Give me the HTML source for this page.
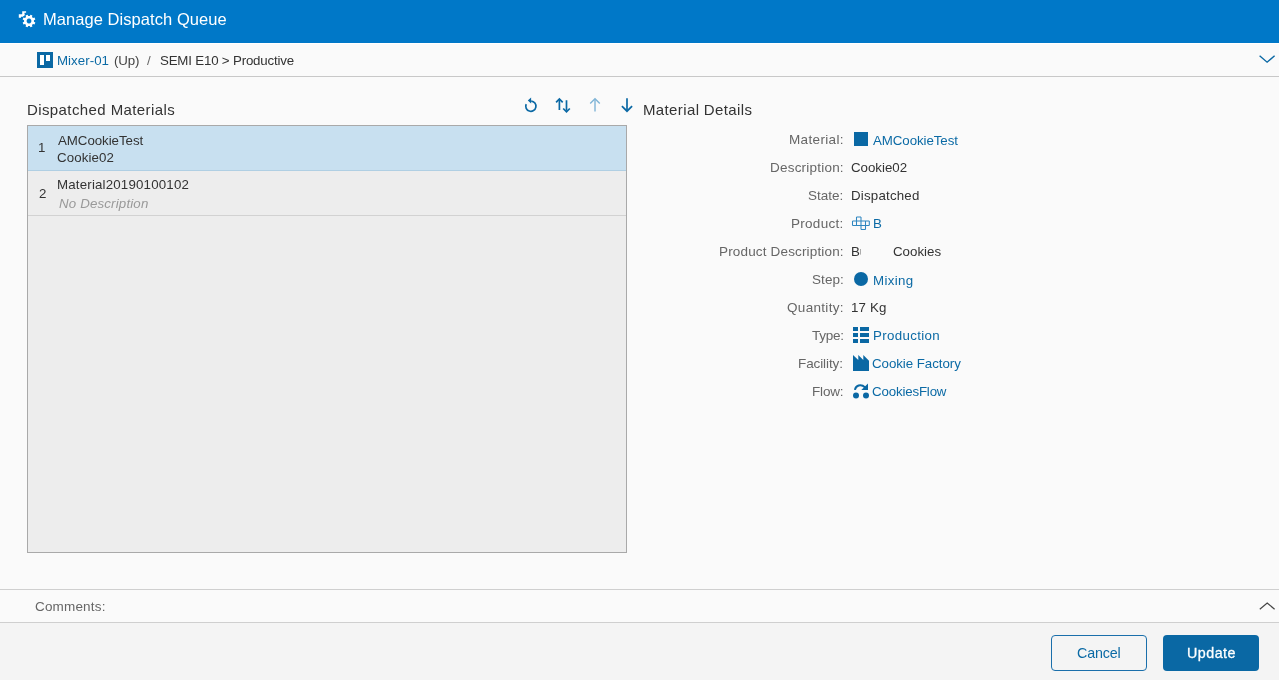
<!DOCTYPE html>
<html><head><meta charset="utf-8">
<style>
*{box-sizing:border-box;margin:0;padding:0}
html,body{width:1279px;height:680px;overflow:hidden;background:#fafafa;font-family:"Liberation Sans",sans-serif;color:#333}
.abs{position:absolute}
.tx{position:absolute;white-space:nowrap;line-height:16px;will-change:transform}
#hdr{position:absolute;left:0;top:0;width:1279px;height:43px;background:#0078c8}
#crumb{position:absolute;left:0;top:43px;width:1279px;height:34px;background:#fafafa;border-top:1px solid #fff;border-bottom:1px solid #c8c8c8}
#list{position:absolute;left:27px;top:125px;width:600px;height:428px;border:1px solid #a9a9a9;background:#ededed}
.row{position:absolute;left:0;width:598px;height:45px;border-bottom:1px solid #d2d2d2}
#cbar{position:absolute;left:0;top:589px;width:1279px;height:34px;border-top:1px solid #cfcfcf;border-bottom:1px solid #cfcfcf;background:#fafafa}
#foot{position:absolute;left:0;top:623px;width:1279px;height:57px;background:#f4f4f4}
.btn{position:absolute;top:635px;height:36px;border-radius:4px}
#bcancel{left:1051px;width:96px;border:1px solid #1a6fab;background:transparent}
#bupdate{left:1163px;width:96px;background:#0a68a4}
</style></head>
<body>
<div id="hdr">
  <svg class="abs" style="left:0;top:0" width="43" height="43" viewBox="0 0 43 43">
    <defs><mask id="gm"><rect width="43" height="43" fill="#fff"/><circle cx="29" cy="21" r="7.2" fill="#000"/></mask></defs>
    <path mask="url(#gm)" fill="#fff" d="M22.2 11.2H26.1V12.7H24.5V14.2H24.8V16.2H23.2V16.8H21V17.8H18.8V14.2H22.2Z"/>
    <path fill="#fff" fill-rule="evenodd" d="M33.94 21.76 L35.33 22.48 L34.52 24.43 L33.03 23.96 L31.96 25.03 L32.43 26.52 L30.48 27.33 L29.76 25.94 L28.24 25.94 L27.52 27.33 L25.57 26.52 L26.04 25.03 L24.97 23.96 L23.48 24.43 L22.67 22.48 L24.06 21.76 L24.06 20.24 L22.67 19.52 L23.48 17.57 L24.97 18.04 L26.04 16.97 L25.57 15.48 L27.52 14.67 L28.24 16.06 L29.76 16.06 L30.48 14.67 L32.43 15.48 L31.96 16.97 L33.03 18.04 L34.52 17.57 L35.33 19.52 L33.94 20.24Z M29 18.6a2.4 2.4 0 1 0 0.001 0Z"/>
  </svg>
</div>
<div id="crumb">
  <svg class="abs" style="left:37px;top:8px" width="16" height="16" viewBox="0 0 16 16">
    <rect width="16" height="16" fill="#0a68a4"/>
    <rect x="3" y="3" width="4" height="10" fill="#fff"/>
    <rect x="9" y="3" width="4" height="6" fill="#fff"/>
  </svg>
  <svg class="abs" style="left:1255px;top:8px" width="24" height="16" viewBox="1255 51 24 16"><path d="M1259.6 54.8l7.5 6.4 7.5-6.4" fill="none" stroke="#0a68a4" stroke-width="1.4"/></svg>
</div>

<!-- toolbar -->
<svg class="abs" style="left:520px;top:94px" width="120" height="22" viewBox="520 94 120 22">
  <g fill="none" stroke="#0a68a4" stroke-width="1.7">
    <path d="M531.2 101.1 A5.1 5.1 0 1 1 526.2 104.1"/>
    <path d="M559.4 100v10M566.5 100.2v10.5"/>
    <path d="M627 98.2v12.5"/>
    <path d="M621.9 106.1l5.1 5.1 5.1-5.1"/>
    <path d="M556.1 102.4l3.3-3.4 3.3 3.4"/>
    <path d="M563.2 108.5l3.3 3.4 3.3-3.4"/>
  </g>
  <path d="M527.8 100.6l3.3-3v6z" fill="#0a68a4"/>
  <g fill="none" stroke="#7fb4d6" stroke-width="1.4">
    <path d="M595 99.2v12.4"/>
    <path d="M590.2 103.6l4.8-4.8 4.8 4.8"/>
  </g>
</svg>

<div id="list">
  <div class="row" style="top:0;background:#c8e0f0;border-bottom-color:#b0cfe3"></div>
  <div class="row" style="top:45px"></div>
</div>

<svg class="abs" style="left:840px;top:120px" width="40" height="290" viewBox="840 120 40 290">
  <rect x="854" y="132" width="14" height="14" fill="#0a68a4"/>
  <path fill="none" stroke="#2f86c0" stroke-width="1.05" d="M856.5 217H861M852.5 221H869.3M852.5 225.5H869.3M861 229.4H865.5M852.5 221V225.5M856.5 217V225.5M861 217V229.4M865.5 221V229.4M869.3 221V225.5"/>
  <circle cx="861" cy="279" r="7" fill="#0a68a4"/>
  <g fill="#0a68a4">
    <rect x="853" y="327" width="5" height="4"/><rect x="860" y="327" width="9" height="4"/>
    <rect x="853" y="333" width="5" height="4"/><rect x="860" y="333" width="9" height="4"/>
    <rect x="853" y="339" width="5" height="4"/><rect x="860" y="339" width="9" height="4"/>
    <path d="M853 355l5.3 5v-5l5 5v-5l5.7 5.8V371H853z"/>
    <circle cx="856" cy="395.4" r="3"/><circle cx="866" cy="395.4" r="3"/>
    <path d="M868 383.6V389.9H861.3Z"/>
  </g>
  <path d="M854.9 389.9C855.8 385.8 860.5 383.2 865.2 387.4" fill="none" stroke="#0a68a4" stroke-width="2"/>
</svg>

<div id="cbar">
  <svg class="abs" style="left:1255px;top:10px" width="24" height="14" viewBox="1255 600 24 14"><path d="M1259.8 609.2l7.4-6.2 7.4 6.2" fill="none" stroke="#444" stroke-width="1.2"/></svg>
</div>
<div id="foot"></div>
<div id="bcancel" class="btn"></div>
<div id="bupdate" class="btn"></div>
<div class="tx" id="title" style="left:43.05px;top:11px;font-size:16.5px;letter-spacing:0.058px;color:#fff;">Manage Dispatch Queue</div>
<div class="tx" id="mixer" style="left:56.55px;top:53px;font-size:13.3px;letter-spacing:0.038px;color:#0b6aa5;">Mixer-01</div>
<div class="tx" id="up" style="left:113.52px;top:53px;font-size:13.3px;letter-spacing:-0.167px;color:#444;">(Up)</div>
<div class="tx" id="slash" style="left:147.27px;top:53px;font-size:13.3px;letter-spacing:0.000px;color:#666;">/</div>
<div class="tx" id="semi" style="left:160.18px;top:53px;font-size:13.3px;letter-spacing:-0.187px;color:#333;">SEMI E10 &gt; Productive</div>
<div class="tx" id="dm" style="left:27.15px;top:102px;font-size:15.0px;letter-spacing:0.402px;color:#333;">Dispatched Materials</div>
<div class="tx" id="md" style="left:643.31px;top:102px;font-size:15.0px;letter-spacing:0.373px;color:#333;">Material Details</div>
<div class="tx" id="n1" style="left:38.37px;top:140px;font-size:13.3px;letter-spacing:0.000px;color:#333;">1</div>
<div class="tx" id="l1a" style="left:58.21px;top:133px;font-size:13.3px;letter-spacing:-0.048px;color:#333;">AMCookieTest</div>
<div class="tx" id="l1b" style="left:57.45px;top:150px;font-size:13.3px;letter-spacing:0.113px;color:#333;">Cookie02</div>
<div class="tx" id="n2" style="left:38.58px;top:186px;font-size:13.3px;letter-spacing:0.000px;color:#333;">2</div>
<div class="tx" id="l2a" style="left:57.45px;top:177px;font-size:13.3px;letter-spacing:0.179px;color:#333;">Material20190100102</div>
<div class="tx" id="l2b" style="left:59.05px;top:196px;font-size:13.3px;letter-spacing:0.162px;color:#999;font-style:italic;">No Description</div>
<div class="tx" id="lb0" style="left:789.43px;top:132px;font-size:13.5px;letter-spacing:0.341px;color:#666;">Material:</div>
<div class="tx" id="lb1" style="left:770.20px;top:160px;font-size:13.5px;letter-spacing:0.212px;color:#666;">Description:</div>
<div class="tx" id="lb2" style="left:808.35px;top:188px;font-size:13.5px;letter-spacing:0.004px;color:#666;">State:</div>
<div class="tx" id="lb3" style="left:791.43px;top:216px;font-size:13.5px;letter-spacing:0.279px;color:#666;">Product:</div>
<div class="tx" id="lb4" style="left:719.20px;top:244px;font-size:13.5px;letter-spacing:0.161px;color:#666;">Product Description:</div>
<div class="tx" id="lb5" style="left:811.64px;top:272px;font-size:13.5px;letter-spacing:0.078px;color:#666;">Step:</div>
<div class="tx" id="lb6" style="left:787.34px;top:300px;font-size:13.5px;letter-spacing:0.318px;color:#666;">Quantity:</div>
<div class="tx" id="lb7" style="left:811.51px;top:328px;font-size:13.5px;letter-spacing:-0.275px;color:#666;">Type:</div>
<div class="tx" id="lb8" style="left:798.43px;top:356px;font-size:13.5px;letter-spacing:-0.102px;color:#666;">Facility:</div>
<div class="tx" id="lb9" style="left:811.92px;top:384px;font-size:13.5px;letter-spacing:-0.164px;color:#666;">Flow:</div>
<div class="tx" id="v0" style="left:873.45px;top:133px;font-size:13.3px;letter-spacing:-0.074px;color:#0b6aa5;">AMCookieTest</div>
<div class="tx" id="v1" style="left:850.79px;top:160px;font-size:13.3px;letter-spacing:-0.008px;color:#333;">Cookie02</div>
<div class="tx" id="v2" style="left:850.65px;top:188px;font-size:13.3px;letter-spacing:0.204px;color:#333;">Dispatched</div>
<div class="tx" id="v3" style="left:873.00px;top:216px;font-size:13.3px;letter-spacing:0.000px;color:#0b6aa5;">B</div>
<div class="tx" id="v4a" style="left:851.00px;top:244px;font-size:13.3px;letter-spacing:0.000px;color:#333;width:10px;overflow:hidden;">Butter</div>
<div class="tx" id="v4b" style="left:893.43px;top:244px;font-size:13.3px;letter-spacing:0.005px;color:#333;">Cookies</div>
<div class="tx" id="v5" style="left:873.02px;top:273px;font-size:13.3px;letter-spacing:0.361px;color:#0b6aa5;">Mixing</div>
<div class="tx" id="v6" style="left:851.24px;top:300px;font-size:13.3px;letter-spacing:0.165px;color:#333;">17 Kg</div>
<div class="tx" id="v7" style="left:872.99px;top:328px;font-size:13.3px;letter-spacing:0.352px;color:#0b6aa5;">Production</div>
<div class="tx" id="v8" style="left:872.46px;top:356px;font-size:13.3px;letter-spacing:-0.046px;color:#0b6aa5;">Cookie Factory</div>
<div class="tx" id="v9" style="left:872.46px;top:384px;font-size:13.3px;letter-spacing:-0.165px;color:#0b6aa5;">CookiesFlow</div>
<div class="tx" id="cmt" style="left:35.29px;top:599px;font-size:13.5px;letter-spacing:0.170px;color:#666;">Comments:</div>
<div class="tx" id="cancel" style="left:1077.24px;top:645px;font-size:14.3px;letter-spacing:-0.166px;color:#0b6aa5;">Cancel</div>
<div class="tx" id="update" style="left:1186.69px;top:645px;font-size:14.3px;letter-spacing:0.478px;color:#fff;-webkit-text-stroke:0.3px #fff;">Update</div>
</body></html>
